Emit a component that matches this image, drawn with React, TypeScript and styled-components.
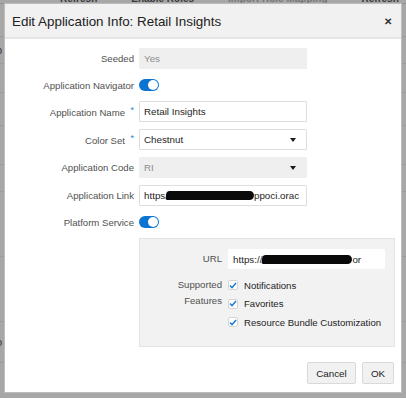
import React from 'react'
import styled, { createGlobalStyle } from 'styled-components'

const GlobalStyle = createGlobalStyle`
  html, body {
    margin: 0;
    padding: 0;
  }
  body {
    font-family: "Liberation Sans", Arial, sans-serif;
    background: #a7a7a7;
  }
`

const Page = styled.div`
  position: relative;
  width: 406px;
  height: 398px;
  overflow: hidden;
  background: #a7a7a7;
`

const Backdrop = styled.div`
  display: flex;
  flex-direction: column;
  color: #3a3a3a;
  font-size: 11px;
`

const BackToolbar = styled.div`
  display: flex;
  gap: 34px;
  height: 9px;
  margin-top: -6px;
  padding-left: 60px;
  font-size: 10px;
  font-weight: bold;
  line-height: 10px;
  white-space: nowrap;
  border-bottom: 1px solid #939393;
`

const BackRow = styled.div<{ $h: number }>`
  height: ${p => p.$h}px;
  display: flex;
  align-items: center;
  margin-left: -4px;
  border-bottom: 1px solid #9b9b9b;
`

const Dialog = styled.div`
  position: absolute;
  left: 4px;
  top: 3px;
  width: 398px;
  height: 390px;
  box-sizing: border-box;
  background: #ffffff;
  border: 1px solid #bdbdbd;
  display: flex;
  flex-direction: column;
`

const Header = styled.div`
  height: 33px;
  background: #f1f1f1;
  border-bottom: 2px solid #e4e4e4;
  display: flex;
  align-items: center;
  justify-content: space-between;
  padding: 0 9px 0 7px;
`

const Title = styled.div`
  font-size: 13.4px;
  color: #222;
  padding-top: 1px;
`

const Close = styled.div`
  font-size: 10px;
  font-weight: bold;
  color: #333;
  line-height: 1;
  padding-top: 2px;
`

const Form = styled.div`
  display: grid;
  grid-template-columns: 129px 168px;
  column-gap: 5px;
  row-gap: 7px;
  padding-top: 9px;
  align-items: center;
`

const Label = styled.div`
  font-size: 9.6px;
  color: #505050;
  text-align: right;
  white-space: nowrap;
`

const Req = styled.span`
  display: inline-block;
  color: #1a7fd4;
  font-size: 9px;
  margin-left: 5px;
  vertical-align: 3px;
  width: 4px;
`

const Field = styled.div<{ $disabled?: boolean }>`
  height: 21px;
  box-sizing: border-box;
  border: 1px solid ${p => (p.$disabled ? '#efefef' : '#dedede')};
  background: ${p => (p.$disabled ? '#efefef' : '#ffffff')};
  color: ${p => (p.$disabled ? '#8e8e8e' : '#1e1e1e')};
  font-size: 9.8px;
  display: flex;
  align-items: center;
  justify-content: space-between;
  padding: 0 10px 0 4px;
  white-space: nowrap;
  overflow: hidden;
  border-radius: 1px;
`

const Arrow = styled.span`
  width: 0;
  height: 0;
  border-left: 3px solid transparent;
  border-right: 3px solid transparent;
  border-top: 4px solid #1a1a1a;
`

const Redact = styled.span<{ $w: number }>`
  display: inline-block;
  width: ${p => p.$w}px;
  height: 9px;
  background: #0a0a0a;
  border-radius: 3px 5px 4px 2px;
  vertical-align: -1px;
  transform: skewX(-8deg);
`

const ToggleCell = styled.div`
  height: 18px;
  display: flex;
  align-items: center;
`

const Toggle = styled.div`
  width: 20px;
  height: 12px;
  border-radius: 6px;
  background: #0b74d1;
  display: flex;
  align-items: center;
  justify-content: flex-end;
  padding: 0 1px;
  box-sizing: border-box;
`

const Knob = styled.div`
  width: 10px;
  height: 10px;
  border-radius: 50%;
  background: #ffffff;
`

const Panel = styled.div`
  grid-column: 2;
  width: 256px;
  box-sizing: border-box;
  background: #f2f2f2;
  border: 1px solid #e3e3e3;
  padding: 10px 9px 14px 0;
  display: grid;
  grid-template-columns: 82px 1fr;
  column-gap: 6px;
  row-gap: 7px;
  align-items: start;
`

const UrlField = styled(Field)`
  height: 20px;
  border-color: #ffffff;
  padding-right: 2px;
  justify-content: flex-start;
`

const PanelLabel = styled(Label)`
  line-height: 20px;
`

const FeatureLabel = styled(Label)`
  line-height: 16px;
  padding-top: 1px;
`

const Checks = styled.div`
  display: flex;
  flex-direction: column;
`

const CheckRow = styled.div`
  height: 18.5px;
  display: flex;
  align-items: center;
  gap: 6px;
  font-size: 9.6px;
  color: #1e1e1e;
  white-space: nowrap;
`

const Box = styled.span`
  width: 10px;
  height: 10px;
  box-sizing: border-box;
  background: #ffffff;
  border: 1px solid #d6d6d6;
  border-radius: 2px;
  display: flex;
  align-items: center;
  justify-content: center;
`

const Footer = styled.div`
  margin-top: auto;
  display: flex;
  justify-content: flex-end;
  gap: 6px;
  padding: 0 7px 8px 0;
`

const Button = styled.button<{ $w: number }>`
  width: ${p => p.$w}px;
  height: 22px;
  background: #f1f1f1;
  border: 1px solid #d9d9d9;
  border-radius: 2px;
  font-family: "Liberation Sans", Arial, sans-serif;
  font-size: 9.8px;
  color: #222;
  padding: 0;
`

const Check = () => (
  <Box>
    <svg width="8" height="7" viewBox="0 0 8 7">
      <path d="M1 3.6 L3 5.6 L7 1" fill="none" stroke="#1677d2" strokeWidth="1.4" />
    </svg>
  </Box>
)

const BACK_ROWS = [
  { h: 32, t: '' },
  { h: 26, t: 'p' },
  { h: 28, t: '' },
  { h: 32, t: 'r' },
  { h: 38, t: 'f' },
  { h: 26, t: 't' },
  { h: 64, t: '' },
  { h: 64, t: '' },
  { h: 40, t: 'o' },
  { h: 60, t: '' }
]

const FEATURES = ['Notifications', 'Favorites', 'Resource Bundle Customization']

const App = () => (
  <Page>
    <GlobalStyle />
    <Backdrop>
      <BackToolbar>
        <span>Refresh</span>
        <span>Enable Roles</span>
        <span style={{ color: '#777' }}>Import Role Mapping</span>
        <span>Refresh</span>
      </BackToolbar>
      {BACK_ROWS.map((row, i) => (
        <BackRow key={i} $h={row.h}>{row.t}</BackRow>
      ))}
    </Backdrop>
    <Dialog>
      <Header>
        <Title>Edit Application Info: Retail Insights</Title>
        <Close>✕</Close>
      </Header>
      <Form>
        <Label>Seeded</Label>
        <Field $disabled>Yes</Field>

        <Label>Application Navigator</Label>
        <ToggleCell><Toggle><Knob /></Toggle></ToggleCell>

        <Label>Application Name<Req>*</Req></Label>
        <Field>Retail Insights</Field>

        <Label>Color Set<Req>*</Req></Label>
        <Field>Chestnut<Arrow /></Field>

        <Label>Application Code</Label>
        <Field $disabled>RI<Arrow /></Field>

        <Label>Application Link</Label>
        <Field style={{ paddingRight: 2 }}>
          <span>https:<Redact $w={88} style={{ marginLeft: -2 }} />ppoci.orac</span>
        </Field>

        <Label>Platform Service</Label>
        <ToggleCell><Toggle><Knob /></Toggle></ToggleCell>

        <Panel>
          <PanelLabel>URL</PanelLabel>
          <UrlField>
            <span>https://<Redact $w={90} />or</span>
          </UrlField>

          <FeatureLabel>Supported<br />Features</FeatureLabel>
          <Checks>
            {FEATURES.map(f => (
              <CheckRow key={f}><Check />{f}</CheckRow>
            ))}
          </Checks>
        </Panel>
      </Form>
      <Footer>
        <Button $w={49}>Cancel</Button>
        <Button $w={32}>OK</Button>
      </Footer>
    </Dialog>
  </Page>
)

export default App
